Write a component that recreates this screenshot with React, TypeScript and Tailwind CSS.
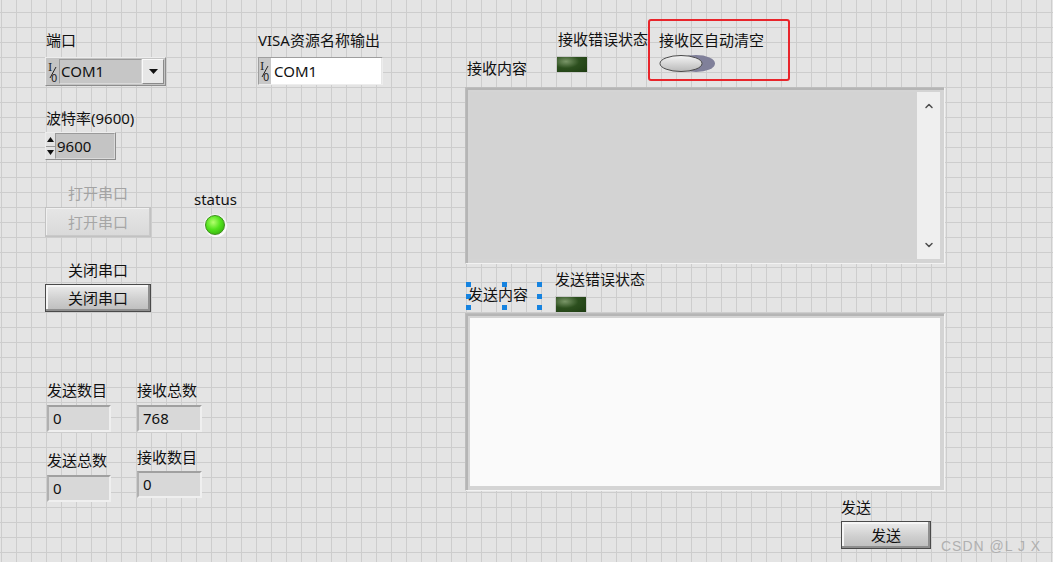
import { ChevronUp, ChevronDown } from "lucide-react";

const CJK = "font-['Noto_Sans','Noto_Sans_CJK_SC',sans-serif]";

function Label({ text, dim = false }: { text: string; dim?: boolean }) {
  return (
    <div
      className={`h-[18px] leading-[18px] text-[15px] whitespace-nowrap ${CJK} ${
        dim ? "text-[#a3a3a3]" : "text-[#111]"
      }`}
    >
      {text}
    </div>
  );
}

// the little "I/O" mark LabVIEW draws in front of VISA controls
function IOMark() {
  return (
    <svg width="12" height="26" viewBox="0 0 12 26" className="shrink-0">
      <text x="1" y="12" fontSize="11" fontFamily="DejaVu Serif, serif" fill="#222">
        I
      </text>
      <line x1="9" y1="8" x2="3" y2="19" stroke="#222" strokeWidth="1" />
      <text x="4" y="23" fontSize="10" fontFamily="DejaVu Sans, sans-serif" fill="#222">
        0
      </text>
    </svg>
  );
}

function NumField({ value, w = "w-[62px]" }: { value: string; w?: string }) {
  return (
    <div
      className={`${w} h-[27px] flex items-center pl-[4px] bg-[#d8d8d8] border-2 border-t-[#a0a0a0] border-l-[#b0b0b0] border-b-[#efefef] border-r-[#efefef] text-[15px] text-[#111] ${CJK}`}
    >
      {value}
    </div>
  );
}

function Button({ text, disabled = false }: { text: string; disabled?: boolean }) {
  return (
    <div
      className={`h-full w-full flex items-center justify-center text-[15px] ${CJK} ${
        disabled
          ? "text-[#a6a6a6] border border-[#c2c2c2] bg-[linear-gradient(to_bottom,#e6e6e6,#d9d9d9)] shadow-[inset_-1px_-1px_0_#c9c9c9,inset_1px_1px_0_#f0f0f0]"
          : "text-[#111] border border-[#4a4a4a] bg-[linear-gradient(to_bottom,#ececec,#cfcfcf_55%,#bdbdbd)] shadow-[inset_-2px_-2px_0_#8e8e8e,inset_2px_2px_0_#f6f6f6]"
      }`}
    >
      {text}
    </div>
  );
}

function DarkLed() {
  return (
    <div className="w-[32px] h-[17px] p-[1px] bg-[#c9c9c9]">
      <div className="w-full h-full bg-[radial-gradient(ellipse_at_30%_30%,#7a9668,#2c4f1e_45%,#1e3c12)]" />
    </div>
  );
}

function Handle() {
  return <div className="w-[5px] h-[5px] bg-[#1683e0]" />;
}

export default function App() {
  return (
    <div
      className={`relative w-[1053px] h-[562px] overflow-hidden bg-[#e4e4e4] bg-[linear-gradient(to_right,#cdcdcd_1px,transparent_1px),linear-gradient(to_bottom,#cdcdcd_1px,transparent_1px)] bg-size-[15px_15px] bg-position-[1px_12px] ${CJK}`}
    >
      {/* 端口 */}
      <div className="absolute left-[45px] top-[31px] flex flex-col gap-[8px]">
        <div className="pl-[1px]">
          <Label text="端口" />
        </div>
        <div className="w-[121px] h-[29px] flex items-stretch bg-[#c4c4c4] border border-t-[#ededed] border-l-[#ededed] border-b-[#8d8d8d] border-r-[#8d8d8d] p-[1px]">
          <IOMark />
          <div className="flex-1 flex items-center pl-[1px] text-[15px] text-[#111] bg-[#c6c6c6] border border-t-[#9a9a9a] border-l-[#9a9a9a] border-b-[#dadada] border-r-[#dadada]">
            COM1
          </div>
          <div className="w-[22px] flex items-center justify-center bg-[#e7e7e7] border border-t-[#fafafa] border-l-[#fafafa] border-b-[#8a8a8a] border-r-[#8a8a8a]">
            <svg width="9" height="5" viewBox="0 0 9 5">
              <path d="M0 0h9L4.5 5z" fill="#111" />
            </svg>
          </div>
        </div>
      </div>

      {/* 波特率 */}
      <div className="absolute left-[45px] top-[109px] flex flex-col gap-[5px]">
        <div className="pl-[1px]">
          <Label text="波特率(9600)" />
        </div>
        <div className="w-[71px] h-[28px] flex items-stretch bg-[#c9c9c9] border border-t-[#ededed] border-l-[#ededed] border-b-[#8d8d8d] border-r-[#8d8d8d]">
          <div className="w-[9px] flex flex-col bg-[#e3e3e3]">
            <div className="flex-1 flex items-center justify-center border-b border-[#9a9a9a]">
              <svg width="7" height="5" viewBox="0 0 7 5">
                <path d="M0 5h7L3.5 0z" fill="#111" />
              </svg>
            </div>
            <div className="flex-1 flex items-center justify-center">
              <svg width="7" height="5" viewBox="0 0 7 5">
                <path d="M0 0h7L3.5 5z" fill="#111" />
              </svg>
            </div>
          </div>
          <div className="flex-1 flex items-center pl-[1px] text-[15px] text-[#111] bg-[#c4c4c4] border border-t-[#9a9a9a] border-l-[#9a9a9a] border-b-[#dadada] border-r-[#dadada]">
            9600
          </div>
        </div>
      </div>

      {/* 打开串口 */}
      <div className="absolute left-[45px] top-[184px] w-[106px] flex flex-col items-center gap-[5px]">
        <Label text="打开串口" dim />
        <div className="w-[106px] h-[30px]">
          <Button text="打开串口" disabled />
        </div>
      </div>

      {/* 关闭串口 */}
      <div className="absolute left-[45px] top-[261px] w-[106px] flex flex-col items-center gap-[5px]">
        <Label text="关闭串口" />
        <div className="w-[106px] h-[28px]">
          <Button text="关闭串口" />
        </div>
      </div>

      {/* status */}
      <div className="absolute left-[194px] top-[190px] flex flex-col items-center gap-[6px]">
        <Label text="status" />
        <div className="w-[22px] h-[22px] rounded-full bg-[#f2f2f2] p-[1px] shadow-[1px_1px_1px_#ffffff]">
          <div className="w-full h-full rounded-full bg-[radial-gradient(circle_at_40%_35%,#b4ff6e,#52e31c_45%,#2d9e0a)] border border-[#3d8f1a]" />
        </div>
      </div>

      {/* VISA资源名称输出 */}
      <div className="absolute left-[258px] top-[31px] flex flex-col gap-[8px]">
        <Label text="VISA资源名称输出" />
        <div className="w-[125px] h-[28px] flex items-stretch bg-[#c8c8c8] border border-t-[#9e9e9e] border-l-[#9e9e9e] border-b-[#ededed] border-r-[#ededed]">
          <IOMark />
          <div className="flex-1 flex items-center pl-[3px] text-[15px] text-[#111] bg-white border-r border-[#e6e6e6]">
            COM1
          </div>
        </div>
      </div>

      {/* counters */}
      <div className="absolute left-[47px] top-[381px] grid grid-cols-[90px_70px] gap-y-[16px]">
        <div className="flex flex-col gap-[6px]">
          <Label text="发送数目" />
          <NumField value="0" w="w-[64px]" />
        </div>
        <div className="flex flex-col gap-[6px]">
          <Label text="接收总数" />
          <NumField value="768" w="w-[65px]" />
        </div>
        <div className="flex flex-col gap-[6px] pt-[3px]">
          <Label text="发送总数" />
          <NumField value="0" w="w-[64px]" />
        </div>
        <div className="flex flex-col gap-[5px]">
          <Label text="接收数目" />
          <NumField value="0" w="w-[65px]" />
        </div>
      </div>

      {/* 接收内容 */}
      <div className="absolute left-[467px] top-[59px]">
        <Label text="接收内容" />
      </div>

      {/* 接收错误状态 */}
      <div className="absolute left-[556px] top-[30px] flex flex-col gap-[8px]">
        <div className="pl-[2px]">
          <Label text="接收错误状态" />
        </div>
        <DarkLed />
      </div>

      {/* 接收区自动清空 (highlighted) */}
      <div className="absolute left-[648px] top-[19px] w-[142px] h-[62px] border-[2.5px] border-[#e8252b] rounded-[3px] flex flex-col pl-[9px] pt-[10px] gap-[5px]">
        <Label text="接收区自动清空" />
        <svg width="58" height="19" viewBox="0 0 58 19">
          <ellipse cx="37" cy="9.5" rx="19" ry="8.5" fill="#80809a" />
          <defs>
            <linearGradient id="tg" x1="0" y1="0" x2="0" y2="1">
              <stop offset="0" stopColor="#f4f4f4" />
              <stop offset="1" stopColor="#b9b9b9" />
            </linearGradient>
          </defs>
          <ellipse cx="22" cy="9.5" rx="21" ry="8" fill="url(#tg)" stroke="#4a4a4a" strokeWidth="1" />
        </svg>
      </div>

      {/* receive area */}
      <div className="absolute left-[465px] top-[87px] w-[480px] h-[177px] flex p-[4px] bg-[#d4d4d4] border border-t-[#bdbdbd] border-l-[#bdbdbd] border-b-[#f2f2f2] border-r-[#f2f2f2] shadow-[inset_2px_2px_0_#b5b5b5]">
        <div className="flex-1 bg-[#d3d3d3]" />
        <div className="w-[23px] flex flex-col justify-between items-center py-[8px] bg-[#efefef] text-[#4d4d4d]">
          <ChevronUp size={12} strokeWidth={3} />
          <ChevronDown size={12} strokeWidth={3} />
        </div>
      </div>

      {/* 发送内容 with selection handles */}
      <div className="absolute left-[466px] top-[282px] w-[76px] h-[28px] flex justify-between">
        <div className="flex flex-col justify-between">
          <Handle />
          <Handle />
          <Handle />
        </div>
        <div className="flex flex-col justify-between">
          <Handle />
          <Handle />
        </div>
        <div className="flex flex-col justify-between">
          <Handle />
          <Handle />
          <Handle />
        </div>
      </div>
      <div className="absolute left-[468px] top-[285px]">
        <Label text="发送内容" />
      </div>

      {/* 发送错误状态 */}
      <div className="absolute left-[555px] top-[270px] flex flex-col gap-[8px]">
        <Label text="发送错误状态" />
        <DarkLed />
      </div>

      {/* send area */}
      <div className="absolute left-[465px] top-[313px] w-[480px] h-[178px] flex p-[4px] bg-[#d4d4d4] border border-t-[#bdbdbd] border-l-[#bdbdbd] border-b-[#f2f2f2] border-r-[#f2f2f2] shadow-[inset_2px_2px_0_#b5b5b5]">
        <div className="flex-1 bg-[#fafafa]" />
      </div>

      {/* 发送 */}
      <div className="absolute left-[841px] top-[498px] flex flex-col gap-[5px]">
        <Label text="发送" />
        <div className="w-[90px] h-[28px]">
          <Button text="发送" />
        </div>
      </div>

      {/* watermark */}
      <div className="absolute left-[941px] top-[537px] text-[14px] leading-[18px] text-[#b0b0b0] font-['Liberation_Sans',sans-serif] tracking-[1px] whitespace-nowrap">
        CSDN @L J X
      </div>
    </div>
  );
}
